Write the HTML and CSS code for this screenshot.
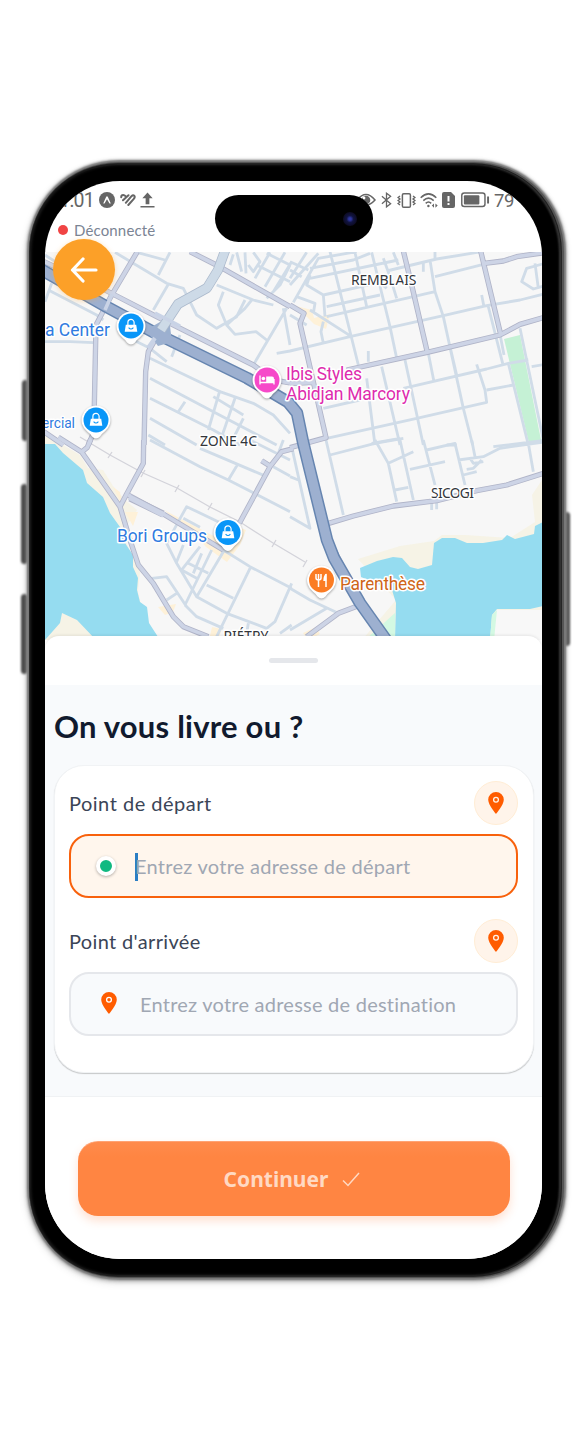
FILE: index.html
```
<!DOCTYPE html>
<html lang="fr">
<head>
<meta charset="utf-8">
<title>Livraison</title>
<link rel="stylesheet" href="styles.css">
</head>
<body>
<div class="phone">
  <i class="side-key key-a"></i><i class="side-key key-b"></i><i class="side-key key-c"></i><i class="side-key key-d"></i>
  <main class="screen">
    <header class="status">
      <div class="status-left">
        <span class="time">11:01</span>
        <svg class="ic-expo" viewBox="0 0 16 16"><circle cx="8" cy="8" r="8" fill="#666"/><path d="M4.200 11.500 7.200 4.800Q8 3.600 8.800 4.800L11.800 11.500 10.500 11.500 8 7.300 5.500 11.500Z" fill="#fff"/></svg>
        <svg class="ic-heart" viewBox="0 0 16 14" fill="none" stroke="#666" stroke-width="2" stroke-linecap="round"><path d="M1.200 4.200Q1.200 2 3.200 2 4.500 2 5.500 3.200M3 7.300 8.500 2.200M5.800 9.800 11.500 3.200Q13 1.600 14.300 2.800 15.300 4.200 13.800 5.800L8.300 12"/></svg>
        <svg class="ic-up" viewBox="0 0 16 16"><path d="M8 0 13.500 6H10V12.500H6V6H2.500Z" fill="#666"/><path d="M.5 15.200H15.500" stroke="#666" stroke-width="1.400"/></svg>
      </div>
      <div class="status-right">
        <svg class="ic-eye" viewBox="0 0 20 14"><path d="M1 7Q10-4 19 7 10 17 1 7Z" fill="none" stroke="#666" stroke-width="1.500"/><circle cx="10" cy="7" r="4.300" fill="#666"/><circle cx="8" cy="5" r="1.400" fill="#fff"/></svg>
        <svg class="ic-bt" viewBox="0 0 12 16"><path d="M1 4 10.500 12 6 15.500V.6L10.500 4 1 12" fill="none" stroke="#666" stroke-width="1.400"/></svg>
        <svg class="ic-vib" viewBox="0 0 19 15" fill="none" stroke="#666"><rect x="5.400" y=".8" width="8" height="13.400" rx="1.300" stroke-width="1.500"/><path d="M3 3 1 4.500 3 6 1 7.500 3 9 1 10.500 3 12M16 3 18 4.500 16 6 18 7.500 16 9 18 10.500 16 12" stroke-width="1.300"/></svg>
        <svg class="ic-wifi" viewBox="0 0 18 15" fill="none" stroke="#666" stroke-width="1.500"><path d="M.7 4.700Q8.500-2.900 16.300 4.700M3.300 7.600Q8.500 2.600 13.700 7.600M5.700 10.400Q8.500 7.700 11.200 10.400"/><circle cx="8.400" cy="13" r="1.200" fill="#666" stroke="none"/><path d="M14 10.500V14.700L11.800 12.600ZM15.400 10.500V14.700L17.700 12.600Z" fill="#666" stroke="none"/></svg>
        <svg class="ic-sim" viewBox="0 0 13 16"><path d="M2 0H9L13 4V14Q13 16 11 16H2Q0 16 0 14V2Q0 0 2 0Z" fill="#666"/><path d="M6.500 4V9.500M6.500 11V13" stroke="#fff" stroke-width="2"/></svg>
        <svg class="ic-bat" viewBox="0 0 30 16"><rect x=".8" y=".8" width="24" height="14" rx="2.600" fill="none" stroke="#666" stroke-width="1.500"/><rect x="3" y="3" width="16" height="9.600" rx="1" fill="#666"/><path d="M28 4.500V11.500" stroke="#666" stroke-width="2"/></svg>
        <span class="pct">79 %</span>
      </div>
    </header>
    <div class="conn"><i></i><span>Déconnecté</span></div>
    <svg class="map" viewBox="45 252 497 388">
      <defs>
        <g id="mid">
          <g transform="translate(40 245) scale(.33333)"><path d="M292 20 215 150 168 240 163 480 162 560 145 600M450 20 535 63 750 185M-20 35 195 135 350 215 640 360 700 405 750 414M348 280 325 320 317 380 312 600M0 552 70 600"/></g>
          <g transform="translate(290 245) scale(.33333)"><path d="M0 180 42 205 30 235 108 578 0 608M340 18 365 120 412 322M170 375 412 322 630 270 690 238 770 215M572 18 632 268M583 55 640 48 680 35 770 22M0 416 70 412"/></g>
          <g transform="translate(40 440) scale(.33333)"><path d="M55 -8 125 36 240 200 270 300 295 375 340 430 400 530 430 560 505 590M152-2 142 22 125 36M311 0 310 70 260 162 240 200M265 165 370 222 550 330M760 26 725 35 690 80 598 250M665 62 690 78"/></g>
          <g transform="translate(290 440) scale(.33333)"><path d="M116 250 190 228 310 198 440 182 560 152 650 135 770 97M50 590 145 520 205 497M135 335 195 460"/></g>
        </g>
        <path id="main" d="M35 266 107 307 157 334 247 378 288 402 297 413 303 442 327 540 334 558 360 603 387 641"/>
        <path id="canal" d="M226 248 218 270 207 288 178 304 161 330"/>
        <path id="pin" d="M0-14.400A14.400 14.400 0 0 1 8.700 11.500Q6.500 13 4 16.500 0 20.500-4 16.500-6.500 13-8.700 11.500A14.400 14.400 0 0 1 0-14.400Z"/>
        <g id="bag"><path d="M-5.200-1.300H5.200L6.300 5.700H-6.300Z" fill="#fff"/><path d="M-3.100-1V-3.500A3.100 3.100 0 0 1 3.100-3.500V-1" fill="none" stroke="#fff" stroke-width="1.200"/><path d="M-2.400 1.600Q0 4.400 2.400 1.600" fill="none" stroke="#0996f8" stroke-width="1.100"/></g>
      </defs>
      <rect x="45" y="252" width="497" height="388" fill="#f7f7f7"/>
      <g class="sand">
        <path d="M45 432 58 442 80 455 88 468 103 470 113 486 125 500 137 510 127 525 126 542 135 560 140 572 138 592 150 640H45Z"/>
        <path d="M358 559 400 546 434 541 442 535 465 535 510 538 535 522 532 495 542 480V640H362L396 600Z"/>
      </g>
      <g class="built">
        <path d="M164 510 225 542 232 525 246 530 240 545 227 562 206 547 200 540ZM125 512 138 512 133 526ZM113 487 120 492 122 505ZM158 607 176 604 173 612 165 615ZM296 306 312 310 314 318 330 314 326 329 314 324ZM212 627 222 629 218 640H209ZM303 633 316 627 320 634 308 640Z"/>
      </g>
      <g class="water">
        <path d="M45 444H55L63 453 83 470 87 483 103 497 110 513 120 527 125 543 133 555 133 567 138 578 137 590 140 602 147 607 149 623 160 640H45Z"/>
        <path d="M360 568 377 561 393 557 402 558 410 567 418 569 432 565 434 543 442 538 455 538 467 543 483 543 502 540 507 535 515 539 534 534 535 526 543 522V606L530 609H497L492 615 490 640H395L396 603 392 590 361 577Z"/>
      </g>
      <path d="M496 610H543V640H494Z" fill="#f8f8f8"/>
      <path class="sand" d="M45 640 60 623 62 613 77 620 96 640Z"/>
      <path d="M504 339 520 335 541 440 529 443Z" fill="#c5f1d5"/>
      <path d="M365 640 395 613V640ZM490 640 492 615 497 610 494 640Z" fill="#d4f9e3"/>
      <g class="minor">
        <g transform="translate(40 245) scale(.33333)"><path d="M15 30 100 85M225 22 380 115 430 130 470 210 530 250 590 215 615 165M355 90 390 22M290 22 375 45M385 118 340 195M530 120 640 165 700 180M550 140 535 180 560 240 585 268 648 260 680 285M560 240 615 190 635 165M640 360 740 190M730 190 750 300M680 160 720 120 750 60M420 270 395 335M330 340 540 440 640 475 700 510 750 565M10 290 90 290 160 293M35 115 15 170M25 135 170 210 190 225M270 280 330 310 380 350M330 400 520 500 710 600M330 460 520 555 600 600M330 520 470 600M325 570 375 600M435 470 415 500M540 435 505 555M585 460 540 590M610 520 570 600M520 455 610 510M580 28 570 60M590 22 605 80M615 22 618 85M640 22 660 50 640 80 625 60M645 100 690 22M675 125 735 22M700 140 755 50M650 60 750 110M680 25 750 60"/></g>
        <g transform="translate(290 245) scale(.33333)"><path d="M-40 325 0 318 180 275 460 212 590 182 690 165 770 145M0 120 85 25M10 172 85 40 200 20M0 100 50 22M0 50 55 75M0 75 35 95M120 20 165 200 205 360M195 22 230 185M245 22 300 245 320 340M310 22 325 60M60 70 190 45 240 25M60 100 325 45M280 40 300 95 320 160M60 90 50 120 100 150 105 215M100 150 270 112 290 130M110 185 270 150M110 215 435 140M20 155 75 175 70 205M420 45 435 140 460 215 520 490 548 600M290 78 440 42 575 20M435 95 580 58M400 50V80M435 20V42M100 230 93 260 100 295M0 210 50 240M60 195 180 272M575 150 582 185M595 185 638 355M615 190 642 330M765 55 710 70 695 110 730 132 770 120M735 55 745 130M235 318V350M275 365 330 600M345 345 400 600M415 325 432 410M340 430 590 372 655 355 715 345M480 305 500 390M100 490 210 465M110 580 380 520 590 472 585 435 560 358M590 435 670 420M230 400 255 600M245 595 330 580M655 355 715 600M690 250 760 585M725 365 765 358M610 605 770 585M470 600H500"/></g>
        <g transform="translate(40 440) scale(.33333)"><path d="M330 0 480 80 565 120 750 215M480 25 680 110M595 70 565 120M630 0 750 60M730 0 715 40M700 80 750 108M555 255 440 200 415 245 380 310 410 370 470 470 560 520 680 565 705 545 755 430M430 235 480 262M550 330 630 380 755 445M630 385 530 590M550 335 470 470M515 330 435 495M335 415 380 410 440 500M380 480 410 460M435 495 470 530 550 565M500 435 580 475M430 315 410 365M480 320 425 390 470 415M445 370 505 400M485 340 460 400M625 550 620 580M720 580 755 555"/></g>
        <g transform="translate(290 440) scale(.33333)"><path d="M108 0 160 225M120 45 255 10 340-5M255 0 295 70 320 185M330 0 370 180M295 70 370 35M315 150 355 142M360 88 465 65M400 0 435 135M410 30 495 10 525 135M545 0 555 50M505 60 580 50 630 25 770 5M520 105 560 95M530 88 550 85 575 60M540 55 550 70 580 65M715 10 730 95M0 110 25 120M5 20 60 265 0 230M440 185V208M425 185V210M0 445 60 480 145 520M0 570 110 505"/></g>
      </g>
      <path d="M80 437 110 455 143 473 177 488 210 507 240 522 273 543 305 562" class="rail"/>
      <path d="M108 458 112 452M141 477 145 470M175 492 179 485M208 510 212 503M272 547 276 540M303 567 307 560" class="rail"/>
      <use href="#mid" class="mid-case"/><use href="#mid" class="mid-fill"/>
      <path d="M130 498 163 514" stroke="#b0b4c8" stroke-width="7"/><path d="M129 497 164 515" stroke="#cdd4e6" stroke-width="5.400"/>
      <use href="#main" class="main-case"/>
      <path d="M146 330 160 322 170 326 172 342 158 346Z" fill="#9bb0cf"/>
      <use href="#main" class="main-fill"/>
      <use href="#canal" class="canal-case"/><use href="#canal" class="canal-fill"/>
      <path d="M155 338 148 348" stroke="#c9d3e6" stroke-width="4"/>
      <path d="M112 294 105 310M155 313 180 326" stroke="#c9d3e6" stroke-width="3.600"/>
      <g class="area">
        <text x="351" y="285" textLength="65.500">REMBLAIS</text><text x="200" y="446" textLength="57">ZONE 4C</text><text x="431" y="498" textLength="43">SICOGI</text><text x="223.500" y="641" textLength="45">RIÉTRY</text>
      </g>
      <g class="poi blue"><text x="45" y="336" textLength="65">a Center</text><text x="42" y="428" textLength="33" class="small">ercial</text><text x="117" y="542" textLength="90">Bori Groups</text></g>
      <g class="poi pink"><text x="286" y="380" textLength="76">Ibis Styles</text><text x="286" y="400" textLength="124">Abidjan Marcory</text></g>
      <g class="poi brown"><text x="340" y="590" textLength="85">Parenthèse</text></g>
      <g transform="translate(131 326)"><use href="#pin" class="pin"/><circle r="12.500" fill="#0996f8"/><use href="#bag"/></g>
      <g transform="translate(96 420)"><use href="#pin" class="pin"/><circle r="12.500" fill="#0996f8"/><use href="#bag"/></g>
      <g transform="translate(228 532.500)"><use href="#pin" class="pin"/><circle r="12.500" fill="#0996f8"/><use href="#bag"/></g>
      <g transform="translate(267 380)"><use href="#pin" class="pin"/><circle r="12.500" fill="#f649c9"/><path d="M-7-4.500V4.500M-7 2.500H7V4.500M7 2V-1" stroke="#fff" stroke-width="1.300" fill="none"/><circle cx="-3.600" cy="-1.500" r="1.800" fill="#fff"/><path d="M-.8 2.500V-3.500H5Q7-3.500 7-1.500V2.500Z" fill="#fff"/></g>
      <g transform="translate(321.500 580)"><use href="#pin" class="pin"/><circle r="12.500" fill="#fb7c23"/><path d="M-5.500-6V-2Q-5.500 0-3 0-.5 0-.5-2V-6M-3-6V7M4.500 7V-6" stroke="#fff" stroke-width="1.500" fill="none"/><path d="M4.800-6.500Q1.800-5 1.800 1H4.800Z" fill="#fff"/></g>
    </svg>
    <section class="sheet">
      <div class="grip"><i></i></div>
      <div class="form">
        <h1>On vous livre ou ?</h1>
        <div class="card">
          <div class="row"><label>Point de départ</label><span class="round"><svg class="marker" viewBox="0 0 16 22"><path d="M8 0A7.800 7.800 0 0 0 .2 7.800C.2 13 8 22 8 22S15.800 13 15.800 7.800A7.800 7.800 0 0 0 8 0Z" fill="#ff5c00"/><circle cx="8" cy="7.800" r="2.400" fill="none" stroke="#fff3e8" stroke-width="1.300"/></svg></span></div>
          <div class="field active"><i class="dot"></i><span class="caret"></span><span class="ph p1">Entrez votre adresse de départ</span></div>
          <div class="row second"><label class="l2">Point d'arrivée</label><span class="round"><svg class="marker" viewBox="0 0 16 22"><path d="M8 0A7.800 7.800 0 0 0 .2 7.800C.2 13 8 22 8 22S15.800 13 15.800 7.800A7.800 7.800 0 0 0 8 0Z" fill="#ff5c00"/><circle cx="8" cy="7.800" r="2.400" fill="none" stroke="#fff3e8" stroke-width="1.300"/></svg></span></div>
          <div class="field"><svg class="marker in" viewBox="0 0 16 22"><path d="M8 0A7.800 7.800 0 0 0 .2 7.800C.2 13 8 22 8 22S15.800 13 15.800 7.800A7.800 7.800 0 0 0 8 0Z" fill="#ff5c00"/><circle cx="8" cy="7.800" r="2.400" fill="none" stroke="#fff" stroke-width="1.300"/></svg><span class="ph p2">Entrez votre adresse de destination</span></div>
        </div>
      </div>
      <footer><button class="go"><span>Continuer</span><svg viewBox="0 0 18 15"><path d="M1 8.500 6 13.500 17 1" fill="none" stroke="#ffd9c3" stroke-width="1.500"/></svg></button></footer>
    </section>
    <div class="back"><svg viewBox="0 0 28 26"><path d="M26 13H2.500M13 2 2.500 13 13 24" fill="none" stroke="#fff" stroke-width="3.200" stroke-linecap="round" stroke-linejoin="round"/></svg></div>
    <div class="island"><i></i></div>
  </main>
</div>
</body>
</html>
```
FILE: styles.css
```
* { box-sizing: border-box; }
body { margin: 0; background: #fff; padding: 164px 18px 0 30px; height: 1440px; font-family: Lato, "Open Sans", sans-serif; overflow: hidden; }
.phone { position: relative; width: 531px; height: 1112px; padding: 17px 19px 17px 15px; background: #000; border-radius: 88px;
  box-shadow: 0 0 0 1px #252525, 1px 0 0 2px #555, 1px 0 2px 4px #777, 1px 1px 4px 4px #aaa, 0 3px 10px 2px rgba(0,0,0,.18), inset -2px 0 2px 0 #333, inset 0 0 3px 1px #222; }
.side-key { position: absolute; width: 7px; background: #4a4a4a; filter: blur(1.2px); z-index: -1; border-radius: 4px; }
.key-a { left: -8px; top: 216px; height: 61px; }
.key-b { left: -9px; top: 320px; height: 80px; }
.key-c { left: -9px; top: 430px; height: 80px; }
.key-d { right: -9px; top: 348px; height: 134px; }
.screen { position: relative; display: flex; flex-direction: column; width: 497px; height: 1078px; background: #fff; border-radius: 75px; overflow: hidden; }
.status { display: flex; justify-content: space-between; align-items: center; height: 38px; padding: 0 0 0 3px; color: #666; font: 19.5px Roboto, sans-serif; flex: none; }
.status-left, .status-right { display: flex; align-items: center; }
.status-left svg, .status-right svg { flex: none; }
.time { width: 46px; display: flex; justify-content: flex-end; white-space: nowrap; letter-spacing: -.7px; line-height: 24px; margin-top: 2px; }
.ic-expo { width: 16px; height: 16px; margin-left: 5px; }
.ic-heart { width: 16px; height: 14px; margin-left: 5px; }
.ic-up { width: 15px; height: 16px; margin-left: 4px; }
.status-right { width: 186px; }
.ic-eye { width: 20px; height: 14px; }
.ic-bt { width: 11px; height: 16px; margin-left: 5px; }
.ic-vib { width: 19px; height: 15px; margin-left: 5px; }
.ic-wifi { width: 18px; height: 15px; margin-left: 4px; }
.ic-sim { width: 13px; height: 16px; margin-left: 4px; }
.ic-bat { width: 29px; height: 16px; margin-left: 6px; }
.pct { margin-left: 4px; margin-top: 1px; white-space: nowrap; font-size: 18.5px; letter-spacing: -.4px; word-spacing: 3px; }
.conn { display: flex; align-items: center; height: 33px; padding: 0 0 12px 13px; gap: 7px; font-size: 15px; color: #7b8494; flex: none; }
.conn i { width: 10px; height: 10px; border-radius: 50%; background: #f04444; }
.conn span { letter-spacing: .15px; line-height: 20px; margin: 0 0 0 -1px; }
.map { display: block; width: 497px; height: 388px; flex: none; }
.sand { fill: #f6f3e6; }
.built { fill: #fef1d8; }
.water { fill: #95dcf0; }
.minor { fill: none; stroke: #d0dce8; stroke-width: 8.5; stroke-linejoin: round; }
.rail { fill: none; stroke: #d3d3da; stroke-width: 1.3; }
.mid-case, .mid-fill, .canal-case, .canal-fill, .main-case, .main-fill { fill: none; stroke-linejoin: round; }
.mid-case { stroke: #b0b4c8; stroke-width: 16; }
.mid-fill { stroke: #cdd4e6; stroke-width: 11; }
.canal-case { stroke: #abb9cc; stroke-width: 10; }
.canal-fill { stroke: #cddae7; stroke-width: 8.5; }
.main-case { stroke: #6685b0; stroke-width: 12.5; }
.main-fill { stroke: #9db0d0; stroke-width: 9.5; }
.area text { font: 14px "Noto Sans", sans-serif; fill: #33363b; stroke: #fff; stroke-width: 3px; paint-order: stroke; stroke-linejoin: round; }
.poi text { font: 400 17.5px Roboto, sans-serif; stroke: #fff; stroke-width: 3px; paint-order: stroke; stroke-linejoin: round; }
.poi .small { font-size: 14px; }
.blue { fill: #2f7be0; }
.pink { fill: #de2cae; }
.brown { fill: #cf6518; }
.pin { fill: #fff; filter: drop-shadow(0 1px 1px rgba(0,0,0,.35)); }
.sheet { position: relative; margin-top: -4px; flex: 1; display: flex; flex-direction: column; background: #fff; border-radius: 14px 14px 0 0; box-shadow: 0 -1px 3px rgba(0,0,0,.08); }
.grip { height: 49px; display: flex; justify-content: center; padding-top: 22px; flex: none; }
.grip i { width: 49px; height: 5px; border-radius: 3px; background: #e5e7eb; }
.form { height: 412px; background: #f8fafc; padding: 19px 8px 0 9px; border-bottom: 1px solid #f0f2f4; flex: none; }
h1 { margin: 0; height: 61px; font-size: 31px; line-height: 44px; font-weight: 700; color: #111a2e; white-space: nowrap; letter-spacing: .22px; }
.card { height: 308px; background: #fff; border: 1px solid #f1f3f5; border-radius: 30px; padding: 15px 15px 13px 14px; box-shadow: 0 1px 1px rgba(0,0,0,.2); }
.row { display: flex; justify-content: space-between; align-items: center; height: 44px; }
.row.second { margin-top: 21px; }
label { font-size: 20px; color: #3b4557; line-height: 26px; white-space: nowrap; letter-spacing: .5px; }
.l2 { letter-spacing: .35px; }
.round { width: 44px; height: 44px; border-radius: 50%; background: #fff4ea; border: 1px solid #ffedd5; display: grid; place-items: center; }
.marker { width: 16px; height: 22px; display: block; }
.field { display: flex; align-items: center; margin-top: 9px; height: 64px; border: 2px solid #e5e7eb; border-radius: 20px; background: #f8fafc; }
.field.active { border-color: #f8610c; background: #fff6ed; }
.dot { width: 20px; height: 20px; margin-left: 25px; border: 4px solid #fff; border-radius: 50%; background: #10b981; box-shadow: 0 1px 3px rgba(0,0,0,.3); }
.caret { width: 3px; height: 28px; background: #2b7ec4; margin: 2px 0 0 19px; }
.ph { font-size: 20px; line-height: 26px; color: #a0a7b3; white-space: nowrap; font-variant-ligatures: none; }
.p1 { letter-spacing: .27px; margin: 0 0 0 -3px; }
.marker.in { margin: 0 0 2px 30px; }
.p2 { margin-left: 23px; letter-spacing: .24px; }
footer { padding: 44px 32px 0 33px; }
.go { width: 432px; height: 75px; border: 0; border-top: 1px solid #ffa374; border-radius: 20px; background: linear-gradient(#ff8b4c, #ff8542 20%); display: flex; align-items: center; justify-content: center; gap: 14px; padding: 0 4px 0 0; font: 700 21px "Noto Sans", sans-serif; color: #ffd9c3; box-shadow: 0 5px 10px rgba(255,120,50,.22); }
.go svg { width: 18px; height: 15px; }
.back { position: absolute; left: 8px; top: 58px; width: 62px; height: 61px; border-radius: 50%; background: #fca028; display: grid; place-items: center; box-shadow: 0 1px 5px rgba(252,160,40,.35); }
.back svg { width: 28px; height: 26px; }
.island { position: absolute; left: 170px; top: 14px; width: 158px; height: 47px; border-radius: 24px; background: #000; display: flex; align-items: center; justify-content: flex-end; padding-right: 16px; }
.island i { width: 14px; height: 14px; border-radius: 50%; background: radial-gradient(circle, #2f37a0 0 12%, #111442 35%, #0d0c26 65%, #070510); }
```
